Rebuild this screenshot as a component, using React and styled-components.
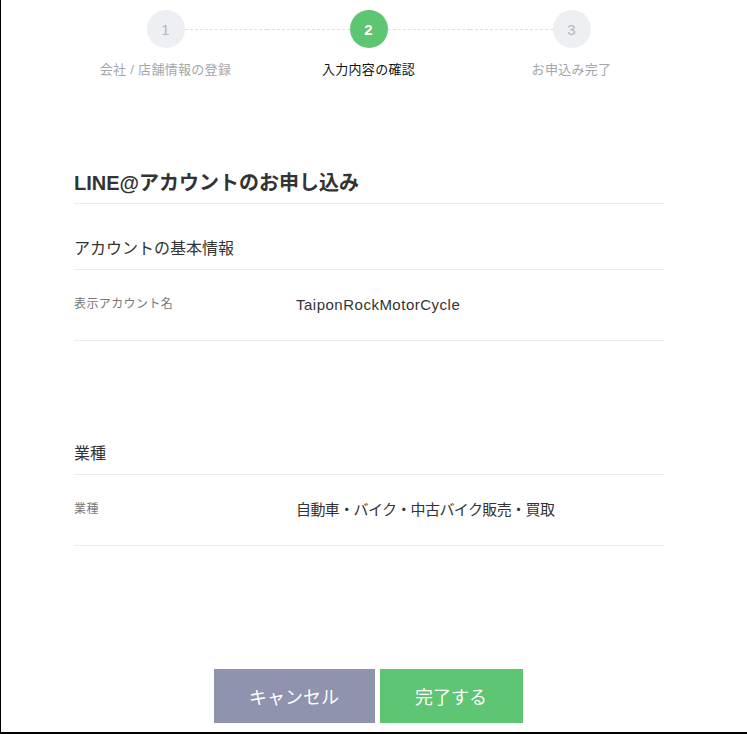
import React from 'react';
import styled, { createGlobalStyle } from 'styled-components';

const GlobalStyle = createGlobalStyle`
  html, body {
    margin: 0;
    padding: 0;
    background: #fff;
  }
  body {
    font-family: "Liberation Sans", "Noto Sans CJK JP", sans-serif;
    color: #333;
  }
`;

const Frame = styled.div`
  width: 746px;
  height: 732px;
  border-left: 1px solid #000;
  border-bottom: 2px solid #000;
  display: flex;
  flex-direction: column;
  background: #fff;
`;

const Stepper = styled.ol`
  list-style: none;
  margin: 10px 0 0 63px;
  padding: 0;
  width: 609px;
  display: flex;
`;

const Step = styled.li`
  flex: 1;
  display: flex;
  flex-direction: column;
  align-items: center;
`;

const CircleRow = styled.div`
  width: 100%;
  display: flex;
  align-items: center;
`;

const Connector = styled.span`
  flex: 1;
  height: 0;
  border-top: 1px dashed ${(p) => (p.$hidden ? 'transparent' : '#dfe0e4')};
`;

const Circle = styled.span`
  width: 38px;
  height: 38px;
  border-radius: 50%;
  display: flex;
  align-items: center;
  justify-content: center;
  font-size: 15px;
  font-weight: ${(p) => (p.$active ? 700 : 400)};
  background: ${(p) => (p.$active ? '#5ec572' : '#eeeff3')};
  color: ${(p) => (p.$active ? '#fff' : '#b3b6be')};
`;

const StepLabel = styled.span`
  margin-top: 13px;
  font-size: 13px;
  line-height: 18px;
  letter-spacing: 0.3px;
  color: ${(p) => (p.$active ? '#111' : '#a2a6ad')};
`;

const Main = styled.main`
  width: 590px;
  margin-left: 73px;
  display: flex;
  flex-direction: column;
`;

const Title = styled.h1`
  margin: 92px 0 0;
  padding-bottom: 8px;
  font-size: 20px;
  line-height: 24px;
  font-weight: 700;
  color: #333;
  border-bottom: 1px solid #ebebeb;
`;

const SectionTitle = styled.h2`
  margin: ${(p) => p.$top}px 0 0;
  padding-bottom: 9px;
  font-size: 16px;
  line-height: 22px;
  font-weight: 400;
  color: #333;
  border-bottom: 1px solid #ebebeb;
`;

const Row = styled.div`
  display: flex;
  align-items: flex-start;
  height: 71px;
  box-sizing: border-box;
  padding-top: 24px;
  border-bottom: 1px solid #ebebeb;
`;

const Label = styled.span`
  width: 222px;
  flex-shrink: 0;
  margin-top: 1px;
  font-size: 12px;
  line-height: 18px;
  letter-spacing: 0.4px;
  color: #777;
`;

const Value = styled.span`
  font-size: 15px;
  line-height: 22px;
  color: #333;
  letter-spacing: ${(p) => p.$spacing || 0}px;
`;

const Actions = styled.div`
  margin-top: 123px;
  padding-right: 2px;
  display: flex;
  justify-content: center;
  gap: 5px;
`;

const Button = styled.button`
  height: 54px;
  padding: 0 35.5px;
  border: none;
  border-radius: 0;
  font-family: inherit;
  font-size: 18px;
  color: #fff;
  background: ${(p) => (p.$primary ? '#5ec572' : '#8f93ad')};
  cursor: pointer;
`;

const steps = ['会社 / 店舗情報の登録', '入力内容の確認', 'お申込み完了'];
const current = 1;

const sections = [
  { title: 'アカウントの基本情報', top: 34, label: '表示アカウント名', value: 'TaiponRockMotorCycle', spacing: 0.5 },
  { title: '業種', top: 102, label: '業種', value: '自動車・バイク・中古バイク販売・買取', spacing: -0.6 },
];

export default function App() {
  return (
    <>
      <GlobalStyle />
      <Frame>
        <Stepper>
          {steps.map((s, i) => (
            <Step key={s}>
              <CircleRow>
                <Connector $hidden={i === 0} />
                <Circle $active={i === current}>{i + 1}</Circle>
                <Connector $hidden={i === steps.length - 1} />
              </CircleRow>
              <StepLabel $active={i === current}>{s}</StepLabel>
            </Step>
          ))}
        </Stepper>
        <Main>
          <Title>LINE@アカウントのお申し込み</Title>
          {sections.map((sec) => (
            <section key={sec.title}>
              <SectionTitle $top={sec.top}>{sec.title}</SectionTitle>
              <Row>
                <Label>{sec.label}</Label>
                <Value $spacing={sec.spacing}>{sec.value}</Value>
              </Row>
            </section>
          ))}
          <Actions>
            <Button>キャンセル</Button>
            <Button $primary>完了する</Button>
          </Actions>
        </Main>
      </Frame>
    </>
  );
}
